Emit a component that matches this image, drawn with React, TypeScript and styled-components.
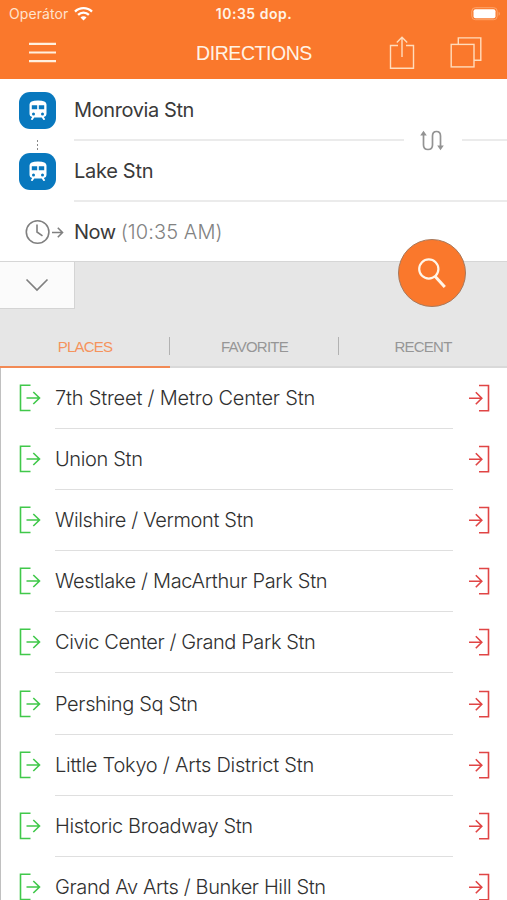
import React from 'react';
import styled, { createGlobalStyle } from 'styled-components';

const ORANGE = '#fa782c';
const FONT = "Inter, 'Liberation Sans', sans-serif";

const GlobalStyle = createGlobalStyle`
  *, *::before, *::after { box-sizing: border-box; }
  html, body { margin: 0; padding: 0; background: #fff; }
  body { overflow: hidden; font-family: ${FONT}; }
  button { border: 0; padding: 0; margin: 0; background: none; font: inherit; color: inherit; }
  svg { display: block; flex: none; }
`;

const Screen = styled.div`
  width: 507px;
  height: 900px;
  overflow: hidden;
  display: flex;
  flex-direction: column;
  background: #fff;
`;

const Header = styled.header`
  flex: none;
  height: 79px;
  background: ${ORANGE};
  color: #fff3e6;
`;

const StatusBar = styled.div`
  display: grid;
  grid-template-columns: 1fr auto 1fr;
  align-items: center;
  height: 27px;
  padding: 0 5px 0 9px;
`;

const Carrier = styled.div`
  display: flex;
  align-items: center;
  gap: 6px;
  font-size: 14px;
  letter-spacing: 0.1px;
  color: #ffe3cd;
`;

const Clock = styled.div`
  font-size: 14px;
  font-weight: 600;
  letter-spacing: 0.5px;
  transform: translateX(-1.5px);
`;

const BatterySlot = styled.div`
  justify-self: end;
`;

const NavBar = styled.div`
  display: grid;
  grid-template-columns: 1fr auto 1fr;
  align-items: center;
  height: 52px;
  padding: 0 25px 0 28px;
`;

const Title = styled.h1`
  margin: 0;
  font-family: 'Liberation Sans', sans-serif;
  font-size: 19.5px;
  font-weight: 400;
  letter-spacing: -0.45px;
  transform: translateX(-1px);
`;

const NavActions = styled.div`
  display: flex;
  justify-content: flex-end;
  align-items: center;
  gap: 35px;
`;

const Form = styled.section`
  flex: none;
  height: 183px;
  border-bottom: 1px solid #d6d6d6;
`;

const FormRow = styled.div<{ $h: number }>`
  display: grid;
  grid-template-columns: 74px 1fr;
  height: ${(p) => p.$h}px;
`;

const IconCell = styled.div<{ $left: number }>`
  display: flex;
  align-items: center;
  padding-left: ${(p) => p.$left}px;
`;

const Badge = styled.div`
  display: flex;
  align-items: center;
  justify-content: center;
  width: 37px;
  height: 37px;
  border-radius: 11px;
  background: #0878be;
`;

const FieldText = styled.div<{ $line?: boolean; $spacing?: number; $top?: number }>`
  display: flex;
  align-items: center;
  padding-top: ${(p) => p.$top ?? 0}px;
  white-space: pre;
  font-size: 20px;
  letter-spacing: ${(p) => p.$spacing ?? -0.2}px;
  color: #3a3a3a;
  border-bottom: ${(p) => (p.$line ? '2px solid #ebebeb' : '0')};
`;

const Muted = styled.span`
  font-weight: 300;
  letter-spacing: 0.1px;
  color: #828282;
`;

const Links = styled.div`
  position: relative;
`;

const DottedLink = styled.div`
  position: absolute;
  left: 37px;
  top: 61px;
  height: 12px;
  width: 1px;
  background: repeating-linear-gradient(#888 0 2px, transparent 2px 4px);
`;

const SwapButton = styled.button`
  position: absolute;
  left: 404px;
  top: 46px;
  width: 58px;
  height: 30px;
  display: flex;
  align-items: center;
  justify-content: center;
  padding-right: 2px;
  background: #fff;
`;

const Panel = styled.section`
  flex: none;
  position: relative;
  display: flex;
  flex-direction: column;
  justify-content: space-between;
  height: 106px;
  background: #e6e6e6;
`;

const Expand = styled.button`
  display: flex;
  align-items: center;
  justify-content: center;
  width: 75px;
  height: 47px;
  background: #fbfbfb;
  border-right: 1.5px solid #d4d4d4;
  border-bottom: 1.5px solid #d4d4d4;
`;

const SearchButton = styled.button`
  position: absolute;
  left: 398px;
  top: -23px;
  width: 68px;
  height: 68px;
  display: flex;
  align-items: center;
  justify-content: center;
  border: 1px solid #a8795c;
  border-radius: 50%;
  background: ${ORANGE};
`;

const Tabs = styled.div`
  display: grid;
  grid-template-columns: 170px 169px 168px;
  height: 43px;
`;

const Tab = styled.button<{ $active?: boolean }>`
  position: relative;
  display: flex;
  align-items: center;
  justify-content: center;
  padding-top: 1px;
  font-family: 'Liberation Sans', sans-serif;
  font-size: 15px;
  letter-spacing: -0.75px;
  color: ${(p) => (p.$active ? '#f5935c' : '#969696')};
  border-bottom: 2px solid ${(p) => (p.$active ? '#f28a55' : '#d9d9d9')};

  &:not(:first-child)::before {
    content: '';
    position: absolute;
    left: -1px;
    top: 12px;
    width: 1px;
    height: 18px;
    background: #b2b2b2;
  }
`;

const List = styled.ul`
  flex: 1;
  min-height: 0;
  overflow: hidden;
  margin: 0;
  padding: 0;
  list-style: none;
  border-left: 1.5px solid #c0c0c0;
`;

const Place = styled.li`
  display: grid;
  grid-template-columns: 54px 398px 1fr;
  height: 61.1px;
`;

const EdgeCell = styled.div<{ $left: number }>`
  display: flex;
  align-items: center;
  padding-left: ${(p) => p.$left}px;
  padding-bottom: 1px;
`;

const PlaceName = styled.div<{ $spacing: number }>`
  display: flex;
  align-items: center;
  white-space: nowrap;
  font-size: 20px;
  font-weight: 300;
  letter-spacing: ${(p) => p.$spacing}px;
  color: #303030;
  border-bottom: 1.5px solid #dfdfdf;
`;

const WifiIcon = () => (
  <svg width="19" height="14" viewBox="0 0 19 14" fill="none" stroke="#fff" strokeWidth="2.3">
    <path d="M1 4.600A12.200 12.200 0 0 1 18 4.600" />
    <path d="M4.100 7.900A7.700 7.700 0 0 1 14.900 7.900" />
    <path d="M6.500 10.400A4.200 4.200 0 0 1 12.500 10.400L9.500 13.500Z" fill="#fff" stroke="none" />
  </svg>
);

const BatteryIcon = () => (
  <svg width="31" height="14" viewBox="0 0 31 14">
    <rect x="0.800" y="0.700" width="25.400" height="12" rx="3.500" fill="none" stroke="#fda56c" />
    <rect x="2.500" y="2.300" width="22" height="9" rx="2" fill="#fff" />
    <path d="M27.600 4.700v4q1.300-.6 1.300-2t-1.300-2Z" fill="#fda56c" />
  </svg>
);

const MenuIcon = () => (
  <svg width="29" height="22" viewBox="0 0 29 22" stroke="#fff0df" strokeWidth="2.200">
    <path d="M1 1.800h27M1 10.500h27M1 19.200h27" />
  </svg>
);

const ShareIcon = () => (
  <svg width="26" height="34" viewBox="0 0 26 34" fill="none" stroke="#ffdcbc" strokeWidth="1.400">
    <path d="M9 9.500H1.500v22.800h23V9.500H17" />
    <path d="M13 21V1.500M7.800 6.500 13 1.300l5.200 5.200" />
  </svg>
);

const CopyIcon = () => (
  <svg width="32" height="32" viewBox="0 0 32 32" fill="none" stroke="#ffdcbc" strokeWidth="1.400">
    <rect x="1.200" y="7.400" width="22.800" height="22.500" />
    <path d="M8.300 7.400V.9h22.500v22.400H24" />
  </svg>
);

const TrainIcon = () => (
  <svg width="18" height="21" viewBox="0 0 18 21">
    <path
      d="M.5 4.500Q.5.500 9 .5t8.500 4v9q0 3-2.700 3.500l1.400 2.200q-.4 1-1.700.8L12.700 17.500H5.300L3.500 20q-1.300.2-1.700-.8L3.200 17Q.5 16.500.5 13.500Z"
      fill="#fff"
    />
    <path d="M2.800 5.200h5.400v4.100H2.800ZM9.800 5.200h5.400v4.100H9.800Z" fill="#0878be" />
    <circle cx="4.500" cy="14" r="1.500" fill="#0878be" />
    <circle cx="13.500" cy="14" r="1.500" fill="#0878be" />
  </svg>
);

const DepartIcon = () => (
  <svg width="40" height="26" viewBox="0 0 40 26" fill="none" stroke="#808080" strokeWidth="1.600">
    <circle cx="12.600" cy="13" r="11.300" />
    <path d="M12 5.500V13l5.500 3.800" />
    <path d="M27 13.500h10.500M32.800 8.800l4.700 4.700-4.700 4.700" />
  </svg>
);

const SwapIcon = () => (
  <svg width="24" height="21" viewBox="0 0 24 21" fill="none" stroke="#939393" strokeWidth="1.700">
    <path d="M3.500 3v12q0 4.500 4.500 4.500t4.500-4.500V6q0-4.500 4-4.500T20.500 6v12" />
    <path d="M.2 5.500 3.500.8l3.300 4.700ZM17.200 15.500l3.300 4.700 3.300-4.700Z" fill="#939393" stroke="none" />
  </svg>
);

const ChevronIcon = () => (
  <svg width="24" height="14" viewBox="0 0 24 14" fill="none" stroke="#808080" strokeWidth="1.700">
    <path d="M1.500 1.500 12 12 22.500 1.500" />
  </svg>
);

const SearchIcon = () => (
  <svg width="30" height="32" viewBox="0 0 30 32" fill="none" stroke="#fff5e8" strokeWidth="2.200">
    <circle cx="11.800" cy="12" r="9.600" />
    <path d="M18 19.300 27.800 30" strokeWidth="3" />
  </svg>
);

const FromIcon = () => (
  <svg width="22" height="28" viewBox="0 0 22 28" fill="none" stroke="#40c84a" strokeWidth="1.600">
    <path d="M11.500 1.200H1.500v25.300h10" />
    <path d="M7.500 14H20.500M14.300 8l6.200 6-6.200 6" />
  </svg>
);

const ToIcon = () => (
  <svg width="22" height="28" viewBox="0 0 22 28" fill="none" stroke="#e04545" strokeWidth="1.600">
    <path d="M11 1.500h9.500v25.300H11" />
    <path d="M1 14.300h12.800M7.800 8.300l6 6-6 6" />
  </svg>
);

const places: { name: string; spacing: number }[] = [
  { name: '7th Street / Metro Center Stn', spacing: -0.2 },
  { name: 'Union Stn', spacing: -0.35 },
  { name: 'Wilshire / Vermont Stn', spacing: -0.36 },
  { name: 'Westlake / MacArthur Park Stn', spacing: -0.34 },
  { name: 'Civic Center / Grand Park Stn', spacing: -0.42 },
  { name: 'Pershing Sq Stn', spacing: -0.36 },
  { name: 'Little Tokyo / Arts District Stn', spacing: -0.25 },
  { name: 'Historic Broadway Stn', spacing: -0.36 },
  { name: 'Grand Av Arts / Bunker Hill Stn', spacing: -0.38 },
];

export default function App() {
  return (
    <Screen>
      <GlobalStyle />
      <Header>
        <StatusBar>
          <Carrier>
            Operátor
            <WifiIcon />
          </Carrier>
          <Clock>10:35 dop.</Clock>
          <BatterySlot>
            <BatteryIcon />
          </BatterySlot>
        </StatusBar>
        <NavBar>
          <MenuIcon />
          <Title>DIRECTIONS</Title>
          <NavActions>
            <ShareIcon />
            <CopyIcon />
          </NavActions>
        </NavBar>
      </Header>

      <Form>
        <Links>
          <FormRow $h={62}>
            <IconCell $left={19}>
              <Badge>
                <TrainIcon />
              </Badge>
            </IconCell>
            <FieldText $line $spacing={-0.4} $top={2}>
              Monrovia Stn
            </FieldText>
          </FormRow>
          <FormRow $h={61}>
            <IconCell $left={19}>
              <Badge>
                <TrainIcon />
              </Badge>
            </IconCell>
            <FieldText $line $spacing={-0.3}>
              Lake Stn
            </FieldText>
          </FormRow>
          <DottedLink />
          <SwapButton aria-label="Swap">
            <SwapIcon />
          </SwapButton>
        </Links>
        <FormRow $h={60}>
          <IconCell $left={25}>
            <DepartIcon />
          </IconCell>
          <FieldText $spacing={-0.5}>
            Now <Muted>(10:35 AM)</Muted>
          </FieldText>
        </FormRow>
      </Form>

      <Panel>
        <Expand aria-label="More options">
          <ChevronIcon />
        </Expand>
        <Tabs>
          <Tab $active>PLACES</Tab>
          <Tab>FAVORITE</Tab>
          <Tab>RECENT</Tab>
        </Tabs>
        <SearchButton aria-label="Search">
          <SearchIcon />
        </SearchButton>
      </Panel>

      <List>
        {places.map((p) => (
          <Place key={p.name}>
            <EdgeCell $left={17.5}>
              <FromIcon />
            </EdgeCell>
            <PlaceName $spacing={p.spacing}>{p.name}</PlaceName>
            <EdgeCell $left={15}>
              <ToIcon />
            </EdgeCell>
          </Place>
        ))}
      </List>
    </Screen>
  );
}
